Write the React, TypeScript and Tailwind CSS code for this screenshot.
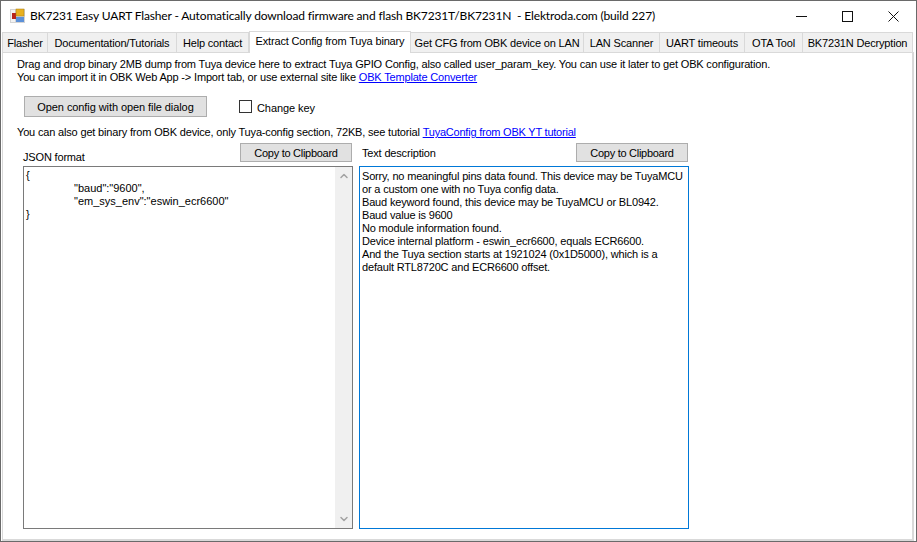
import React from 'react';
import { ChevronUp, ChevronDown } from 'lucide-react';

const tabs = [
  { name: 'Flasher', width: 'w-[46px]' },
  { name: 'Documentation/Tutorials', width: 'w-[129px]' },
  { name: 'Help contact', width: 'w-[72px]' },
  { name: 'Extract Config from Tuya binary', width: 'w-[162px]', active: true },
  { name: 'Get CFG from OBK device on LAN', width: 'w-[173px]' },
  { name: 'LAN Scanner', width: 'w-[76px]' },
  { name: 'UART timeouts', width: 'w-[85px]' },
  { name: 'OTA Tool', width: 'w-[58px]' },
  { name: 'BK7231N Decryption', width: 'w-[110px]' },
];

const CopyButton = ({ className }: { className: string }) => (
  <button className={`h-[19px] w-[112px] bg-[#e1e1e1] border border-[#adadad] leading-[16px] tracking-[-0.28px] text-black ${className}`}>
    Copy to Clipboard
  </button>
);

const AppIcon = () => (
  <svg width="16" height="16" viewBox="0 0 16 16" className="shrink-0">
    <rect x="0" y="1" width="15" height="14" fill="#d4d4d4" />
    <rect x="1" y="2" width="4" height="12" fill="#f2f2f2" />
    <rect x="2" y="5" width="4" height="6" fill="#b8241c" />
    <rect x="6" y="1" width="8" height="7" fill="#e8b020" stroke="#a87c10" strokeWidth="0.5" />
    <rect x="6" y="9" width="8" height="5" fill="#5c90d8" />
  </svg>
);

const App = () => {
  return (
    <div className="w-[917px] h-[542px] bg-white border border-[#6a6a6a] overflow-hidden font-['Liberation_Sans',sans-serif] text-[11px] tracking-[-0.17px] text-black flex flex-col">
      {/* title bar */}
      <div className="h-[30px] shrink-0 flex items-center pl-[9px] bg-white">
        <AppIcon />
        <span className="ml-[4px] font-['Lato',sans-serif] text-[12px] tracking-[-0.15px] whitespace-pre">
          BK7231 Easy UART Flasher - Automatically download firmware and flash BK7231T/BK7231N  - Elektroda.com (build 227)
        </span>
        <div className="ml-auto flex items-center">
          <div className="w-[46px] flex justify-center">
            <svg width="11" height="11" viewBox="0 0 11 11" shapeRendering="crispEdges"><rect x="0" y="5" width="11" height="1" fill="#111" /></svg>
          </div>
          <div className="w-[46px] flex justify-center">
            <svg width="11" height="11" viewBox="0 0 11 11" shapeRendering="crispEdges"><rect x="0.5" y="0.5" width="10" height="10" fill="none" stroke="#111" /></svg>
          </div>
          <div className="w-[46px] flex justify-center">
            <svg width="11" height="11" viewBox="0 0 11 11"><path d="M0.5 0.5 L10.5 10.5 M10.5 0.5 L0.5 10.5" stroke="#111" strokeWidth="1" fill="none" /></svg>
          </div>
        </div>
      </div>

      {/* tabs */}
      <div className="h-[21px] shrink-0 flex items-end pl-[1px] relative z-10">
        {tabs.map((tab) =>
          tab.active ? (
            <div key={tab.name} className={`${tab.width} h-[22px] -mb-[1px] bg-white border border-[#d9d9d9] border-b-0 text-center leading-[18px] whitespace-nowrap`}>
              {tab.name}
            </div>
          ) : (
            <div key={tab.name} className={`${tab.width} h-[20px] bg-[#f0f0f0] border border-[#d9d9d9] border-l-0 first:border-l border-b-0 text-center leading-[20px] whitespace-nowrap`}>
              {tab.name}
            </div>
          )
        )}
      </div>

      {/* tab page */}
      <div className="flex-1 ml-[1px] mr-[2px] bg-white border-2 border-t border-l border-[#d9d9d9] pl-[14px] flex flex-col">
        <p className="mt-[5px] leading-[13px] whitespace-nowrap">
          Drag and drop binary 2MB dump from Tuya device here to extract Tuya GPIO Config, also called user_param_key. You can use it later to get OBK configuration.
        </p>
        <p className="leading-[13px] whitespace-nowrap">
          You can import it in OBK Web App -&gt; Import tab, or use external site like{' '}
          <a className="text-[#0000ff] underline">OBK Template Converter</a>
        </p>

        <div className="mt-[12px] flex items-center">
          <button className="ml-[7px] w-[183px] h-[21px] bg-[#e1e1e1] border border-[#adadad] leading-[18px] tracking-[-0.08px]">
            Open config with open file dialog
          </button>
          <div className="ml-[32px] w-[13px] h-[13px] bg-white border border-[#333333]" />
          <span className="ml-[5px] mt-[3px] tracking-[-0.08px]">Change key</span>
        </div>

        <p className="mt-[9px] leading-[13px] whitespace-nowrap">
          You can also get binary from OBK device, only Tuya-config section, 72KB, see tutorial{' '}
          <a className="text-[#0000ff] underline tracking-[-0.22px]">TuyaConfig from OBK YT tutorial</a>
        </p>

        <div className="mt-[4px] flex">
          {/* JSON column */}
          <div className="ml-[6px] w-[330px] flex flex-col">
            <div className="h-[23px] flex items-start justify-between">
              <span className="mt-[8px] leading-[13px]">JSON format</span>
              <CopyButton className="mr-[1px]" />
            </div>
            <div className="h-[363px] border border-[#7a7a7a] flex">
              <pre className="flex-1 pl-[2px] pt-[2px] font-['Liberation_Sans',sans-serif] text-[11px] tracking-normal leading-[13px] [tab-size:24px]">
                {'{\n\t\t"baud":"9600",\n\t\t"em_sys_env":"eswin_ecr6600"\n}'}
              </pre>
              <div className="w-[17px] bg-[#f0f0f0] flex flex-col justify-between items-center py-[3px] text-[#a3a3a3]">
                <ChevronUp size={12} strokeWidth={3} />
                <ChevronDown size={12} strokeWidth={3} />
              </div>
            </div>
          </div>

          {/* Text column */}
          <div className="ml-[6px] w-[330px] flex flex-col">
            <div className="h-[23px] flex items-start justify-between">
              <span className="mt-[4px] ml-[3px] leading-[13px]">Text description</span>
              <CopyButton className="mr-[1px]" />
            </div>
            <div className="h-[363px] border border-[#0078d7] pl-[2px] pt-[3px] leading-[13px]">
              <p>Sorry, no meaningful pins data found. This device may be TuyaMCU</p>
              <p>or a custom one with no Tuya config data.</p>
              <p>Baud keyword found, this device may be TuyaMCU or BL0942.</p>
              <p>Baud value is 9600</p>
              <p>No module information found.</p>
              <p>Device internal platform - eswin_ecr6600, equals ECR6600.</p>
              <p>And the Tuya section starts at 1921024 (0x1D5000), which is a</p>
              <p>default RTL8720C and ECR6600 offset.</p>
            </div>
          </div>
        </div>
      </div>
    </div>
  );
};

export default App;
